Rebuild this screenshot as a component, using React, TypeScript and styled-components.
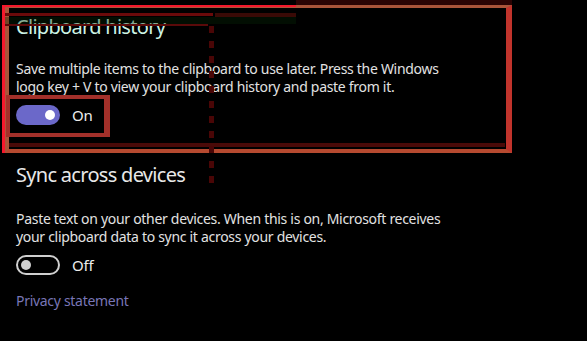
import React from 'react';
import styled, { createGlobalStyle } from 'styled-components';

const Global = createGlobalStyle`
  html, body {
    margin: 0;
    padding: 0;
    background: #000;
  }
  body {
    width: 587px;
    height: 341px;
    overflow: hidden;
    font-family: "Noto Sans", "Open Sans", sans-serif;
  }
`;

const Page = styled.div`
  position: relative;
  width: 587px;
  height: 341px;
  background: #000;
  padding: 13px 0 0 16px;
  box-sizing: border-box;
  color: #e6e6e6;
`;

const Section = styled.section<{ $gap?: number }>`
  display: flex;
  flex-direction: column;
  align-items: flex-start;
  margin-bottom: ${p => p.$gap ?? 0}px;
`;

const Title = styled.h2<{ $tint?: boolean }>`
  margin: 0;
  font-size: 20px;
  font-weight: 400;
  letter-spacing: -0.7px;
  line-height: 28px;
  color: ${p => (p.$tint ? '#cdf3e4' : '#e8e8e8')};
`;

const Text = styled.p<{ $top: number }>`
  margin: ${p => p.$top}px 0 0;
  font-size: 14px;
  letter-spacing: -0.3px;
  line-height: 18px;
  color: #e2e2e2;
  width: 452px;
`;

const ToggleRow = styled.div`
  display: flex;
  align-items: center;
  gap: 12px;
  margin-top: 9px;
  height: 20px;
`;

const Track = styled.div<{ $on: boolean }>`
  position: relative;
  width: 44px;
  height: 20px;
  box-sizing: border-box;
  border-radius: 10px;
  background: ${p => (p.$on ? '#6b68c9' : 'transparent')};
  border: ${p => (p.$on ? 'none' : '2px solid #cfcfcf')};
`;

const Knob = styled.span<{ $on: boolean }>`
  position: absolute;
  top: 50%;
  width: 10px;
  height: 10px;
  margin-top: -5px;
  border-radius: 50%;
  background: ${p => (p.$on ? '#fff' : '#cfcfcf')};
  ${p => (p.$on ? 'right: 5px;' : 'left: 3px;')}
`;

const State = styled.span`
  font-size: 15px;
  letter-spacing: -0.2px;
  color: #ececec;
`;

const Link = styled.a`
  margin-top: 16px;
  font-size: 14px;
  letter-spacing: -0.3px;
  color: #7876b6;
  text-decoration: none;
`;

/* annotation marks laid over the screenshot */
const Mark = styled.div`
  position: absolute;
  pointer-events: none;
  box-sizing: border-box;
`;

const Toggle = ({ on }: { on: boolean }) => (
  <ToggleRow>
    <Track $on={on}>
      <Knob $on={on} />
    </Track>
    <State>{on ? 'On' : 'Off'}</State>
  </ToggleRow>
);

export default function App() {
  return (
    <>
      <Global />
      <Page>
        <Section $gap={36}>
          <Title $tint>Clipboard history</Title>
          <Text $top={19}>
            Save multiple items to the clipboard to use later. Press the Windows
            logo key + V to view your clipboard history and paste from it.
          </Text>
          <Toggle on />
        </Section>
        <Section>
          <Title>Sync across devices</Title>
          <Text $top={21}>
            Paste text on your other devices. When this is on, Microsoft receives
            your clipboard data to sync it across your devices.
          </Text>
          <Toggle on={false} />
          <Link href="#">Privacy statement</Link>
        </Section>

        {/* big box */}
        <Mark style={{ left: 5, top: 5, width: 507, height: 148, borderTop: '3px solid #a9553a', borderRight: '6px solid #c1342c', borderBottom: '4px solid #b64a30', borderLeft: '4px solid #a9553a' }} />
        <Mark style={{ left: 9, top: 143, width: 496, height: 4, background: '#4a0a08' }} />
        <Mark style={{ left: 296, top: 0, width: 216, height: 5, background: '#2a0404' }} />
        {/* bright red lines */}
        <Mark style={{ left: 2, top: 5, width: 3, height: 148, background: '#f5182c' }} />
        <Mark style={{ left: 2, top: 5, width: 294, height: 2, background: '#f5182c' }} />
        <Mark style={{ left: 5, top: 13, width: 208, height: 3, background: '#6a0a0a' }} />
        <Mark style={{ left: 215, top: 13, width: 81, height: 4, background: '#3a0a06' }} />
        <Mark style={{ left: 5, top: 17, width: 291, height: 7, background: 'rgba(6,40,6,0.35)' }} />
        <Mark style={{ left: 5, top: 24, width: 203, height: 2, background: '#5a0a0a' }} />
        {/* small box round the toggle */}
        <Mark style={{ left: 6, top: 95, width: 104, height: 42, border: '4px solid #a3302a', borderRightWidth: 6 }} />
        {/* dashed guide */}
        <Mark style={{ left: 209, top: 26, width: 5, height: 164, background: 'repeating-linear-gradient(to bottom, #4a0606 0 7px, transparent 7px 15px)' }} />
      </Page>
    </>
  );
}
